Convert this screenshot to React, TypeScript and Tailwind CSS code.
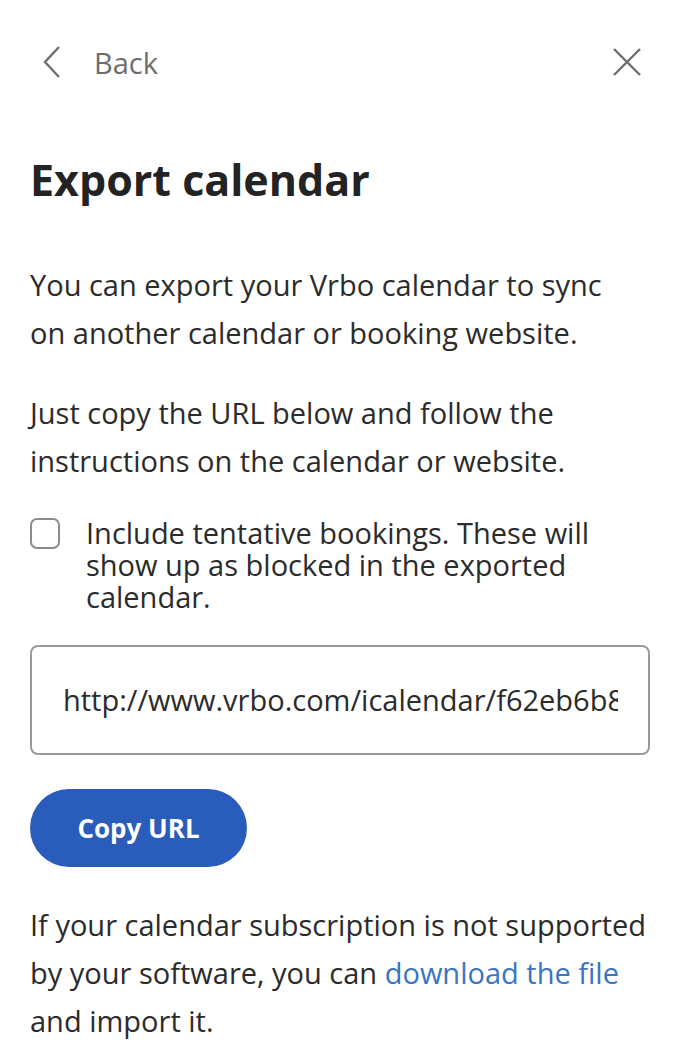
export default function App() {
  return (
    <div className="min-h-[1056px] w-[678px] bg-white px-[30px] font-['Open_Sans',sans-serif] text-[#2b2b2b]">
      <div className="flex h-[124px] items-center justify-between">
        <button className="flex items-center gap-[32px] pl-[12px] text-[#6e6e6e]">
          <svg width="20" height="34" viewBox="0 0 20 34" fill="none" stroke="currentColor" strokeWidth="2.4">
            <path d="M17 2 L3 17 L17 32" />
          </svg>
          <span className="text-[29px] leading-none">Back</span>
        </button>
        <button className="mr-[6px] text-[#6e6e6e]">
          <svg width="30" height="30" viewBox="0 0 30 30" fill="none" stroke="currentColor" strokeWidth="2.4">
            <path d="M2 2 L28 28 M28 2 L2 28" />
          </svg>
        </button>
      </div>

      <h1 className="mt-[28px] text-[43px] font-bold leading-[56px] text-[#232323]">Export calendar</h1>

      <div className="mt-[53px] max-w-[605px] space-y-[32px] text-[29px] leading-[48px]">
        <p>You can export your Vrbo calendar to sync on another calendar or booking website.</p>
        <p>Just copy the URL below and follow the instructions on the calendar or website.</p>
      </div>

      <label className="mt-[32px] flex items-start gap-[26px]">
        <span className="mt-[1px] h-[31px] w-[30px] shrink-0 rounded-[7px] border-2 border-[#8c8c8c]" />
        <span className="w-[540px] text-[29px] leading-[32px]">
          Include tentative bookings. These will show up as blocked in the exported calendar.
        </span>
      </label>

      <div className="-mr-[2px] mt-[32px] flex h-[110px] items-center rounded-[8px] border-2 border-[#9a9a9a] pl-[31px] pr-[30px]">
        <span className="overflow-hidden whitespace-nowrap text-[29px]">
          http://www.vrbo.com/icalendar/f62eb6b83a4c4d9c9b1e
        </span>
      </div>

      <button className="mt-[34px] flex h-[78px] w-[217px] items-center justify-center rounded-full bg-[#2a5cbc] text-[26px] font-bold text-white">
        Copy URL
      </button>

      <p className="mt-[34px] text-[29px] leading-[48px]">
        If your calendar subscription is not supported by your software, you can{" "}
        <a className="text-[#3a75c4]">download the file</a> and import it.
      </p>
    </div>
  );
}
